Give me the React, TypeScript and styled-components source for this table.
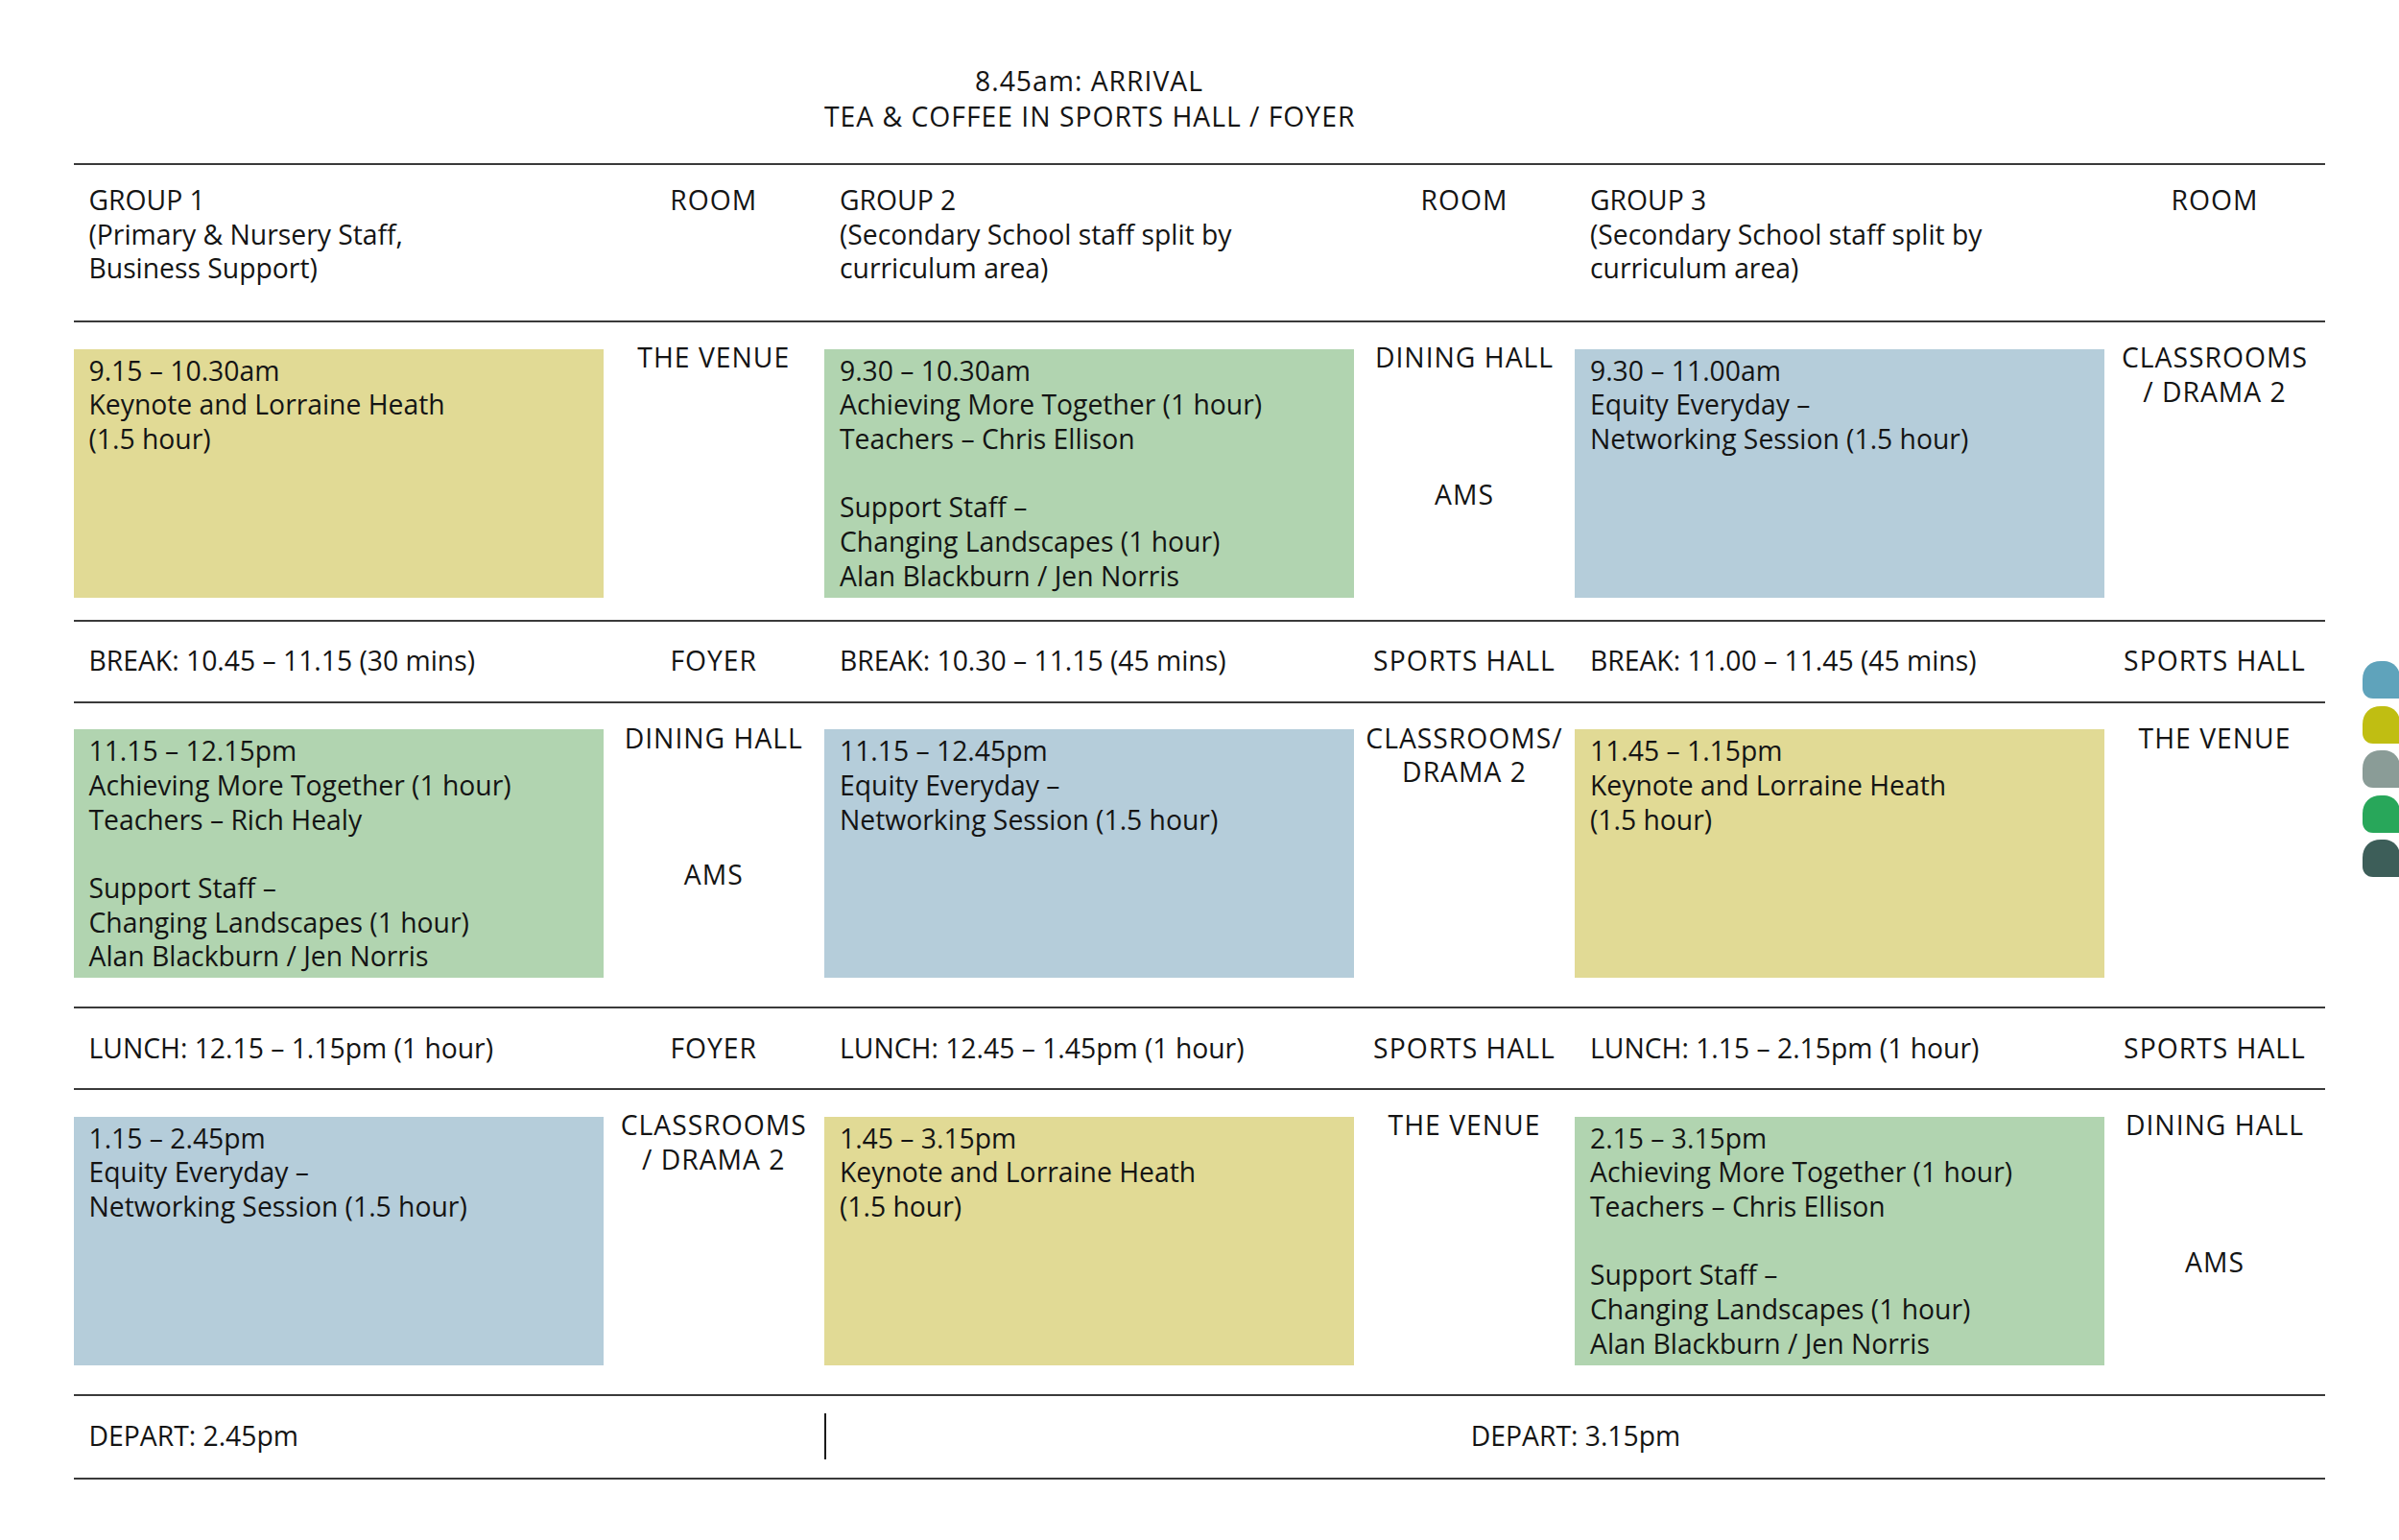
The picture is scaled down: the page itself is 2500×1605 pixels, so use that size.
import React from "react";
import styled, { createGlobalStyle } from "styled-components";

const GlobalStyle = createGlobalStyle`
  html, body {
    margin: 0;
    padding: 0;
    background: #fff;
    overflow: hidden;
  }
  body {
    font-family: "Open Sans", "Noto Sans", sans-serif;
    color: #141414;
  }
`;

const COLS = "552px 230.5px 552px 230px 552px 230px";

type Tone = "yellow" | "green" | "blue";

const tones: Record<Tone, string> = {
  yellow: "#e1da95",
  green: "#b1d4b0",
  blue: "#b5cdda",
};

type Session = { tone: Tone; lines: string[]; room: string[]; roomExtra?: string };

const rows: { sessions: Session[]; bottom: number }[] = [
  {
    bottom: 23,
    sessions: [
      { tone: "yellow", lines: ["9.15 – 10.30am", "Keynote and Lorraine Heath", "(1.5 hour)"], room: ["THE VENUE"] },
      {
        tone: "green",
        lines: ["9.30 – 10.30am", "Achieving More Together (1 hour)", "Teachers – Chris Ellison", "", "Support Staff –", "Changing Landscapes (1 hour)", "Alan Blackburn / Jen Norris"],
        room: ["DINING HALL"],
        roomExtra: "AMS",
      },
      { tone: "blue", lines: ["9.30 – 11.00am", "Equity Everyday –", "Networking Session (1.5 hour)"], room: ["CLASSROOMS", "/ DRAMA 2"] },
    ],
  },
  {
    bottom: 30,
    sessions: [
      {
        tone: "green",
        lines: ["11.15 – 12.15pm", "Achieving More Together (1 hour)", "Teachers – Rich Healy", "", "Support Staff –", "Changing Landscapes (1 hour)", "Alan Blackburn / Jen Norris"],
        room: ["DINING HALL"],
        roomExtra: "AMS",
      },
      { tone: "blue", lines: ["11.15 – 12.45pm", "Equity Everyday –", "Networking Session (1.5 hour)"], room: ["CLASSROOMS/", "DRAMA 2"] },
      { tone: "yellow", lines: ["11.45 – 1.15pm", "Keynote and Lorraine Heath", "(1.5 hour)"], room: ["THE VENUE"] },
    ],
  },
  {
    bottom: 30,
    sessions: [
      { tone: "blue", lines: ["1.15 – 2.45pm", "Equity Everyday –", "Networking Session (1.5 hour)"], room: ["CLASSROOMS", "/ DRAMA 2"] },
      { tone: "yellow", lines: ["1.45 – 3.15pm", "Keynote and Lorraine Heath", "(1.5 hour)"], room: ["THE VENUE"] },
      {
        tone: "green",
        lines: ["2.15 – 3.15pm", "Achieving More Together (1 hour)", "Teachers – Chris Ellison", "", "Support Staff –", "Changing Landscapes (1 hour)", "Alan Blackburn / Jen Norris"],
        room: ["DINING HALL"],
        roomExtra: "AMS",
      },
    ],
  },
];

const breaks = [
  [
    ["BREAK: 10.45 – 11.15 (30 mins)", "FOYER"],
    ["BREAK: 10.30 – 11.15 (45 mins)", "SPORTS HALL"],
    ["BREAK: 11.00 – 11.45 (45 mins)", "SPORTS HALL"],
  ],
  [
    ["LUNCH: 12.15 – 1.15pm (1 hour)", "FOYER"],
    ["LUNCH: 12.45 – 1.45pm (1 hour)", "SPORTS HALL"],
    ["LUNCH: 1.15 – 2.15pm (1 hour)", "SPORTS HALL"],
  ],
];

const leaves = ["#5fa3bb", "#c0be12", "#8a9c97", "#28a75a", "#3d5e59"];

const Leaf = ({ color }: { color: string }) => (
  <svg width="38" height="39" viewBox="0 0 38 39">
    <path d="M0 19 C0 7 8 0 19 0 L23 0 C30 0 36 5 38 11 L38 39 L11 39 C4 39 0 34 0 28 Z" fill={color} />
  </svg>
);

export default function App() {
  return (
    <Page>
      <GlobalStyle />
      <TitleGrid>
        <Title>
          8.45am: ARRIVAL
          <br />
          TEA &amp; COFFEE IN SPORTS HALL / FOYER
        </Title>
      </TitleGrid>

      <Table>
        <HeaderRow>
          <GroupHead>
            GROUP 1
            <br />
            (Primary &amp; Nursery Staff,
            <br />
            Business Support)
          </GroupHead>
          <RoomHead>ROOM</RoomHead>
          <GroupHead>
            GROUP 2
            <br />
            (Secondary School staff split by
            <br />
            curriculum area)
          </GroupHead>
          <RoomHead>ROOM</RoomHead>
          <GroupHead>
            GROUP 3
            <br />
            (Secondary School staff split by
            <br />
            curriculum area)
          </GroupHead>
          <RoomHead>ROOM</RoomHead>
        </HeaderRow>

        {rows.map((row, i) => (
          <React.Fragment key={i}>
            <SessionRow $bottom={row.bottom}>
              {row.sessions.map((s, j) => (
                <React.Fragment key={j}>
                  <SessionBox $tone={s.tone}>
                    {s.lines.map((l, k) => (
                      <Line key={k}>{l || "\u00a0"}</Line>
                    ))}
                  </SessionBox>
                  <RoomCell>
                    {s.room.map((r, k) => (
                      <Line key={k}>{r}</Line>
                    ))}
                    {s.roomExtra && <RoomExtra>{s.roomExtra}</RoomExtra>}
                  </RoomCell>
                </React.Fragment>
              ))}
            </SessionRow>
            {breaks[i] && (
              <BreakRow>
                {breaks[i].map(([label, room], j) => (
                  <React.Fragment key={j}>
                    <BreakLabel>{label}</BreakLabel>
                    <BreakRoom>{room}</BreakRoom>
                  </React.Fragment>
                ))}
              </BreakRow>
            )}
          </React.Fragment>
        ))}

        <DepartRow>
          <DepartLeft>DEPART: 2.45pm</DepartLeft>
          <DepartRight>DEPART: 3.15pm</DepartRight>
        </DepartRow>
      </Table>

      <LeafStack>
        {leaves.map((c) => (
          <Leaf key={c} color={c} />
        ))}
      </LeafStack>
    </Page>
  );
}

const Page = styled.div`
  position: relative;
  width: 2500px;
  height: 1605px;
  box-sizing: border-box;
  padding: 66px 0 0 76.5px;
  font-size: 28.3px;
  line-height: 35.7px;
`;

const TitleGrid = styled.div`
  display: grid;
  grid-template-columns: ${COLS};
  width: 2346.5px;
  padding-bottom: 30px;
`;

const Title = styled.div`
  grid-column: 3;
  text-align: center;
  line-height: 37px;
  letter-spacing: 1px;
  white-space: nowrap;
`;

const Table = styled.div`
  width: 2346.5px;
  border-bottom: 2px solid #3a3a3a;
`;

const BaseRow = styled.div`
  display: grid;
  grid-template-columns: ${COLS};
  border-top: 2px solid #3a3a3a;
`;

const HeaderRow = styled(BaseRow)`
  padding: 19px 0 36px;
`;

const GroupHead = styled.div`
  padding-left: 16px;
`;

const RoomHead = styled.div`
  text-align: center;
  letter-spacing: 1px;
`;

const SessionRow = styled(BaseRow)<{ $bottom: number }>`
  padding: 19px 0 ${({ $bottom }) => $bottom}px;
`;

const SessionBox = styled.div<{ $tone: Tone }>`
  margin-top: 8.5px;
  height: 259px;
  box-sizing: border-box;
  padding: 5px 16px 0;
  background: ${({ $tone }) => tones[$tone]};
`;

const Line = styled.div`
  white-space: nowrap;
`;

const RoomCell = styled.div`
  text-align: center;
  margin-left: -8px;
  margin-right: -8px;
  letter-spacing: 1px;
`;

const RoomExtra = styled.div`
  margin-top: 107px;
`;

const BreakRow = styled(BaseRow)`
  height: 83px;
  align-items: center;
`;

const BreakLabel = styled.div`
  padding-left: 16px;
  white-space: nowrap;
`;

const BreakRoom = styled.div`
  text-align: center;
  white-space: nowrap;
  letter-spacing: 1px;
`;

const DepartRow = styled(BaseRow)`
  height: 85px;
  align-items: center;
`;

const DepartLeft = styled.div`
  grid-column: 1 / span 2;
  padding-left: 16px;
`;

const DepartRight = styled.div`
  grid-column: 3 / span 4;
  height: 48px;
  display: flex;
  align-items: center;
  justify-content: center;
  border-left: 2.5px solid #1a1a1a;
`;

const LeafStack = styled.div`
  position: absolute;
  top: 689px;
  right: 0;
  width: 38px;
  display: flex;
  flex-direction: column;
  gap: 7.5px;

  svg {
    display: block;
  }
`;
